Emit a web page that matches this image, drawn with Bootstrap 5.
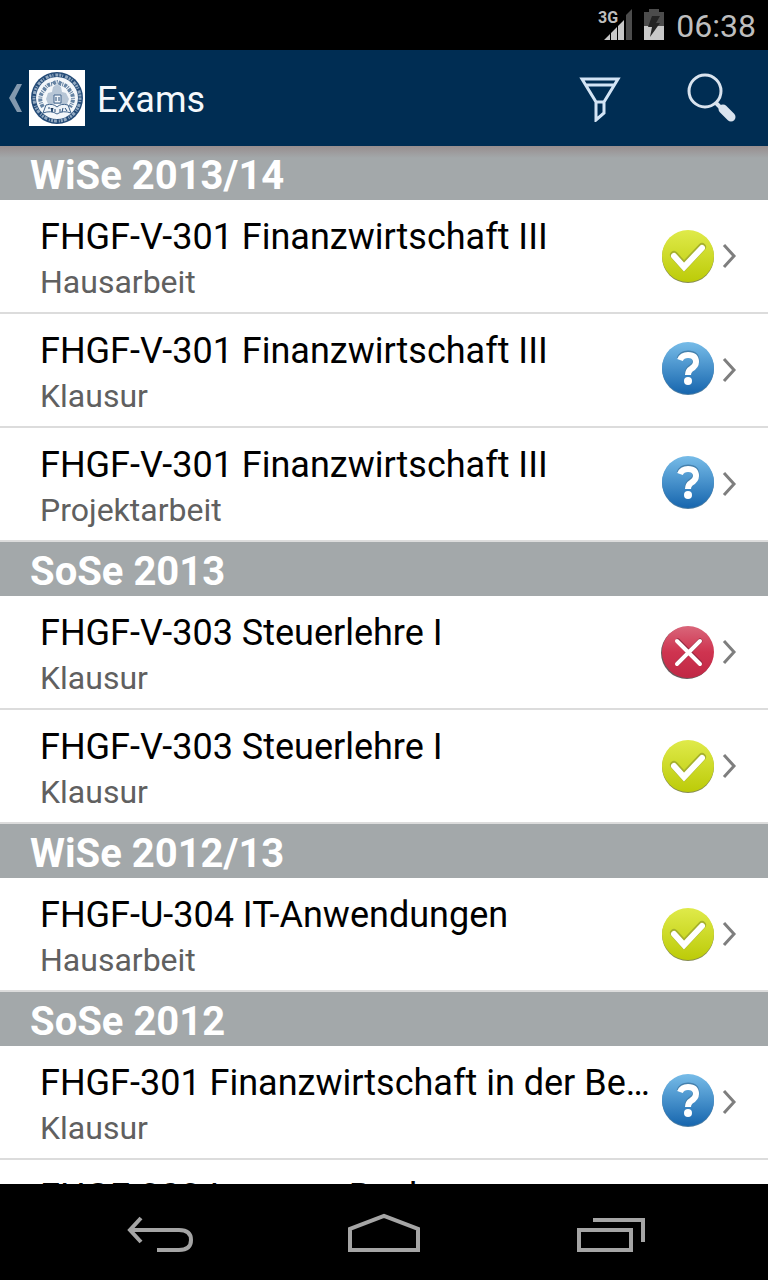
<!DOCTYPE html>
<html lang="en">
<head>
<meta charset="utf-8">
<meta name="viewport" content="width=device-width, initial-scale=1">
<title>Exams</title>
<link rel="stylesheet" href="https://cdn.jsdelivr.net/npm/bootstrap@5.3.0/dist/css/bootstrap.min.css">
<style>
body { font-family: Roboto, sans-serif; background: #fff; }
.status-bar { height: 50px; background: #000; color: #bebebe; padding: 2px 12px 0 0; gap: 12px; }
.clock { font-size: 32px; line-height: 48px; }
.action-bar { height: 96px; background: #002d53; color: #f4f8fc; padding-left: 6px; z-index: 1; }
.action-bar::after { content: ""; position: absolute; top: 100%; left: 0; right: 0; height: 12px; background: linear-gradient(rgba(140, 115, 115, .5), transparent); }
.action-bar h1 { font-size: 36px; line-height: 48px; font-weight: 400; }
.icon-btn { width: 112px; height: 96px; }
.home-link { gap: 6px; }
.term { font-size: 40px; line-height: 48px; font-weight: 700; background: #a3a8aa; color: #fff; padding: 6px 0 0 30px; }
.list-group-flush > .exam-item, .list-group-flush > .exam-item:last-child { height: 114px; padding: 9px 26px 0 40px; border: 0; border-bottom: 2px solid #dcdcdc; }
.exam-name { font-size: 36px; line-height: 56px; color: #000; }
.exam-kind { font-size: 32px; line-height: 34px; color: #606060; }
.state { width: 60px; height: 60px; }
.chevron { width: 24px; height: 60px; }
.nav-keys { background: #000; padding: 8px 82px 0; height: 96px; }
</style>
</head>
<body>
<svg class="position-absolute" width="0" height="0" aria-hidden="true">
  <defs>
    <linearGradient id="green" x2="0" y2="1"><stop stop-color="#dfea4a"/><stop offset="1" stop-color="#bccb08"/></linearGradient>
    <linearGradient id="blue" x2="0" y2="1"><stop stop-color="#77bce8"/><stop offset="1" stop-color="#1766ae"/></linearGradient>
    <linearGradient id="red" x2="0" y2="1"><stop stop-color="#d9667a"/><stop offset=".5" stop-color="#cf3450"/><stop offset="1" stop-color="#c02845"/></linearGradient>
  </defs>
  <symbol id="passed" viewBox="0 0 60 60">
    <circle cx="30" cy="32" r="26" fill="#868c50"/><circle cx="30" cy="31" r="26" fill="url(#green)"/>
    <path d="M16 30l10 11 18-19" fill="none" stroke="#a5b02c" stroke-width="8" stroke-linecap="round"/>
    <path d="M16 31l10 11 18-19" fill="none" stroke="#fff" stroke-width="6" stroke-linecap="round"/>
  </symbol>
  <symbol id="open" viewBox="0 0 60 60">
    <circle cx="30" cy="30" r="26" fill="#4d7da2"/><circle cx="30" cy="29" r="26" fill="url(#blue)"/>
    <path d="M22 20q2-5 8-5 8 0 8 7 0 4-5 7-3 2-3 6" fill="none" stroke="#4581ad" stroke-width="7"/>
    <path d="M22 21q2-5 8-5 8 0 8 7 0 4-5 7-3 2-3 6" fill="none" stroke="#fff" stroke-width="6"/>
    <circle cx="30" cy="42" r="4" fill="#fff"/>
  </symbol>
  <symbol id="failed" viewBox="0 0 60 60">
    <circle cx="29" cy="32" r="26" fill="#69585c"/><circle cx="30" cy="31" r="26" fill="url(#red)"/>
    <path d="M20 20l22 22M42 20L20 42" stroke="#942840" stroke-width="5" stroke-linecap="round"/>
    <path d="M19 20l23 23M42 20L19 43" stroke="#fff" stroke-width="4" stroke-linecap="round"/>
  </symbol>
  <symbol id="chevron" viewBox="0 0 24 60"><path d="M6 20l10 11L6 42" fill="none" stroke="#7e7e7e" stroke-width="3"/></symbol>
</svg>
<div class="d-flex flex-column vh-100 overflow-hidden">
  <div class="status-bar d-flex justify-content-end align-items-center flex-shrink-0">
    <svg width="34" height="36" viewBox="0 0 34 36" role="img" aria-label="3G signal">
      <path d="M34 1v31h-6V7z" fill="#4c4c4c"/>
      <path d="M6 32l6-6v6zM13 25l6-6v13h-6zM20 18l6-6v20h-6z" fill="#c8c8c8"/>
      <text x="0" y="15" font-size="16" font-weight="700" fill="#bebebe">3G</text>
    </svg>
    <svg width="20" height="36" viewBox="0 0 20 36" role="img" aria-label="Charging">
      <path d="M0 4h5V1h10v3h5v14H0z" fill="#4c4c4c"/><path d="M0 18h20v14H0z" fill="#c8c8c8"/>
      <path d="M8 8h8l-4 7h4L6 29l2-10H4z" fill="#242424"/>
    </svg>
    <span class="clock">06:38</span>
  </div>
  <header class="action-bar d-flex align-items-center flex-shrink-0 position-relative">
    <a href="#" class="home-link d-flex align-items-center text-decoration-none" aria-label="Back">
      <svg width="17" height="32" viewBox="0 0 17 32"><path d="M11 2h5L9 16l7 14h-5L3 16z" fill="#8399ae"/></svg>
      <svg width="56" height="56" viewBox="0 0 56 56">
        <path d="M0 0h56v56H0z" fill="#fff"/>
        <circle cx="28" cy="28" r="26" fill="#244b77"/>
        <circle cx="28" cy="28" r="23" fill="none" stroke="#91a8c0" stroke-width="3" stroke-dasharray="2 1 1 2 3 1"/>
        <circle cx="28" cy="28" r="21" fill="#f4f7fa"/>
        <path d="M14 37q-6-9 1-17 3-6 9-6 4-4 8 0 6 1 9 7 6 7 0 16" fill="none" stroke="#6583a3" stroke-width="4" stroke-dasharray="3 1 1 1"/>
        <path d="M17 29l2-6 4-1 1-5 4-3 4 3 1 5 4 1 3 6-2 5H19z" fill="#b7c6d6"/>
        <path d="M25 25h7v8h-7zM17 35l-3 8q8-3 14 1 6-4 14-1l-3-8q-7-2-11 2-4-4-11-2z" fill="#eef3f8" stroke="#42658c"/>
        <path d="M27 27v4M30 27v4M19 38h2M22 38l1 4 1-4M26 39v3M31 39v3M34 38l-1 4M36 38l2 3" stroke="#244b77" stroke-width="1"/>
      </svg>
    </a>
    <h1 class="mb-0 ms-2 ps-1 pt-1 flex-grow-1">Exams</h1>
    <button type="button" class="btn icon-btn p-0 border-0" aria-label="Filter">
      <svg width="48" height="48" viewBox="0 0 48 48" fill="none" stroke="#d3e4f5" stroke-width="3"><path d="M6 5h36L28 28v11l-8 7V28zM10 11h28M20 28h8"/></svg>
    </button>
    <button type="button" class="btn icon-btn p-0 border-0" aria-label="Search">
      <svg width="52" height="52" viewBox="0 0 52 52" fill="none" stroke="#d9e3ee"><circle cx="19" cy="19" r="16" stroke-width="3"/><path d="M30 31l5 5" stroke-width="4"/><path d="M37 37l8 8" stroke-width="9" stroke-linecap="round"/></svg>
    </button>
  </header>
  <main class="flex-fill overflow-hidden" id="exams"></main>
  <nav class="nav-keys d-flex flex-shrink-0 justify-content-between" aria-label="System">
    <button type="button" class="btn border-0 p-0 col-3" aria-label="Back">
      <svg width="72" height="48" viewBox="0 0 72 48" fill="none" stroke="#a5a5a5" stroke-width="4"><path d="M8 18h49q12 0 12 10t-12 10H35M19 6L8 18l11 12"/></svg>
    </button>
    <button type="button" class="btn border-0 p-0 col-3" aria-label="Home">
      <svg width="72" height="48" viewBox="0 0 72 48" fill="none" stroke="#a5a5a5" stroke-width="4"><path d="M2 38V17L36 4l34 13v21z"/></svg>
    </button>
    <button type="button" class="btn border-0 p-0 col-3" aria-label="Recent apps">
      <svg width="72" height="48" viewBox="0 0 72 48" fill="none" stroke="#a5a5a5" stroke-width="4"><path d="M4 18h52v20H4zM18 8h50v22"/></svg>
    </button>
  </nav>
</div>
<script src="https://cdn.jsdelivr.net/npm/bootstrap@5.3.0/dist/js/bootstrap.bundle.min.js"></script>
<script>
const terms = [
  ['WiSe 2013/14', [['FHGF-V-301 Finanzwirtschaft III', 'Hausarbeit', 'passed'], ['FHGF-V-301 Finanzwirtschaft III', 'Klausur', 'open'], ['FHGF-V-301 Finanzwirtschaft III', 'Projektarbeit', 'open']]],
  ['SoSe 2013', [['FHGF-V-303 Steuerlehre I', 'Klausur', 'failed'], ['FHGF-V-303 Steuerlehre I', 'Klausur', 'passed']]],
  ['WiSe 2012/13', [['FHGF-U-304 IT-Anwendungen', 'Hausarbeit', 'passed']]],
  ['SoSe 2012', [['FHGF-301 Finanzwirtschaft in der Betriebswirtschaft', 'Klausur', 'open'], ['FHGF-303 Internes Rechnungswesen', '', 'open']]]
];
document.getElementById('exams').innerHTML = terms.map(([term, exams]) => `
  <h2 class="term mb-0">${term}</h2>
  <div class="list-group list-group-flush">${exams.map(([name, kind, state]) => `
    <a href="#" class="exam-item list-group-item list-group-item-action d-flex">
      <div class="flex-grow-1 overflow-hidden">
        <div class="exam-name text-truncate">${name}</div>
        <div class="exam-kind">${kind}</div>
      </div>
      <svg class="state flex-shrink-0 mt-3" role="img" aria-label="${state}"><use href="#${state}"/></svg>
      <svg class="chevron flex-shrink-0 mt-3" aria-hidden="true"><use href="#chevron"/></svg>
    </a>`).join('')}
  </div>`).join('');
</script>
</body>
</html>
